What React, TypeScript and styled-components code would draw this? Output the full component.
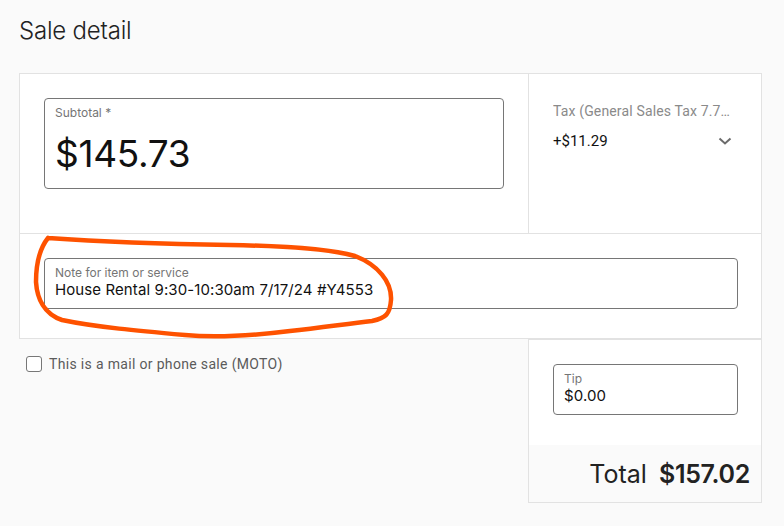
import React from 'react';
import styled, { createGlobalStyle } from 'styled-components';

const GlobalStyle = createGlobalStyle`
  html, body {
    margin: 0;
    padding: 0;
    background: #fafafa;
  }
  body {
    font-family: Inter, "Liberation Sans", sans-serif;
    color: #111;
  }
`;

export default function App() {
  return (
    <Page>
      <GlobalStyle />
      <Title>Sale detail</Title>
      <Grid>
        <Cell>
          <Field height={91}>
            <FieldLabel>Subtotal *</FieldLabel>
            <BigValue>$145.73</BigValue>
          </Field>
        </Cell>
        <TaxCell>
          <TaxLabel>Tax (General Sales Tax 7.75%)</TaxLabel>
          <TaxRow>
            <TaxValue>+$11.29</TaxValue>
            <Chevron width="14" height="8" viewBox="0 0 14 8">
              <path d="M1.5 1.5 L7 6.5 L12.5 1.5" fill="none" stroke="#6b6b6b" strokeWidth="2" />
            </Chevron>
          </TaxRow>
        </TaxCell>
        <NoteCell>
          <Field height={51}>
            <FieldLabel>Note for item or service</FieldLabel>
            <Value>House Rental 9:30-10:30am 7/17/24 #Y4553</Value>
          </Field>
        </NoteCell>
        <Moto>
          <Box />
          <MotoLabel>This is a mail or phone sale (MOTO)</MotoLabel>
        </Moto>
        <TipCell>
          <TipArea>
            <Field height={51}>
              <FieldLabel>Tip</FieldLabel>
              <Value>$0.00</Value>
            </Field>
          </TipArea>
          <TotalBar>
            <TotalWord>Total</TotalWord>
            <TotalAmount>$157.02</TotalAmount>
          </TotalBar>
        </TipCell>
      </Grid>
      <Scribble width="784" height="526" viewBox="0 0 784 526">
        <path
          d="M48 238 C 90 241, 160 244, 230 245 C 290 246, 330 249, 355 256 C 378 265, 392 282, 391 300 C 390 314, 386 318, 372 321 C 345 324, 320 328, 290 331 C 250 336, 215 338, 185 335 C 140 331, 95 327, 62 320 C 44 314, 37 298, 36 282 C 36 262, 40 248, 48 238"
          fill="none"
          stroke="#fe5200"
          strokeWidth="4.5"
          strokeLinecap="round"
          strokeLinejoin="round"
        />
      </Scribble>
    </Page>
  );
}

const Page = styled.div`
  position: relative;
  width: 784px;
  height: 526px;
  padding: 16px 0 0 19px;
  box-sizing: border-box;
  overflow: hidden;
`;

const Title = styled.h1`
  margin: 0;
  font-size: 24px;
  line-height: 30px;
  font-weight: 300;
  color: #222;
  letter-spacing: -0.2px;
`;

const Grid = styled.div`
  margin-top: 27px;
  display: grid;
  grid-template-columns: 509px 234px;
  grid-template-rows: 161px 105px 164px;
`;

const Cell = styled.div`
  background: #fff;
  border: 1px solid #e2e2e2;
  border-right: none;
  padding: 24px 24px 0 24px;
`;

const TaxCell = styled.div`
  background: #fff;
  border: 1px solid #e2e2e2;
  padding: 27px 29px 0 24px;
  min-width: 0;
`;

const NoteCell = styled.div`
  grid-column: 1 / 3;
  background: #fff;
  border: 1px solid #e2e2e2;
  border-top: none;
  padding: 24px 23px 0 24px;
`;

const Field = styled.div<{ height: number }>`
  height: ${(p) => p.height}px;
  box-sizing: border-box;
  border: 1px solid #767676;
  border-radius: 4px;
  background: #fff;
  padding: 6px 10px 0 10px;
  display: flex;
  flex-direction: column;
`;

const FieldLabel = styled.div`
  font-size: 12px;
  line-height: 15px;
  color: #757575;
`;

const BigValue = styled.div`
  margin-top: 12px;
  font-size: 37px;
  line-height: 44px;
  color: #111;
  letter-spacing: -0.3px;
`;

const Value = styled.div`
  margin-top: 0;
  font-size: 15px;
  line-height: 20px;
  color: #111;
  letter-spacing: 0.1px;
`;

const TaxLabel = styled.div`
  font-family: Roboto, "Liberation Sans", sans-serif;
  font-size: 14px;
  line-height: 20px;
  color: #8a8a8a;
  letter-spacing: 0.15px;
  white-space: nowrap;
  overflow: hidden;
  text-overflow: ellipsis;
`;

const TaxRow = styled.div`
  margin-top: 10px;
  display: flex;
  align-items: center;
  justify-content: space-between;
`;

const TaxValue = styled.div`
  font-family: Roboto, "Liberation Sans", sans-serif;
  font-size: 15px;
  line-height: 20px;
  color: #111;
`;

const Chevron = styled.svg`
  display: block;
`;

const Moto = styled.label`
  display: flex;
  align-items: center;
  gap: 7px;
  align-self: start;
  padding: 16px 0 0 7px;
`;

const Box = styled.span`
  width: 16px;
  height: 16px;
  box-sizing: border-box;
  border: 1.5px solid #777;
  border-radius: 3px;
  background: #fff;
`;

const MotoLabel = styled.span`
  font-family: Roboto, "Liberation Sans", sans-serif;
  font-size: 14px;
  line-height: 18px;
  color: #5b5b5b;
  letter-spacing: 0.33px;
`;

const TipCell = styled.div`
  background: #fff;
  border: 1px solid #e2e2e2;
  display: flex;
  flex-direction: column;
`;

const TipArea = styled.div`
  padding: 24px 23px 0 24px;
  flex: 1;
`;

const TotalBar = styled.div`
  height: 57px;
  background: #fafafa;
  display: flex;
  align-items: center;
  justify-content: flex-end;
  gap: 12px;
  padding-right: 11px;
  color: #222;
`;

const TotalWord = styled.span`
  font-size: 25px;
  font-weight: 400;
`;

const TotalAmount = styled.span`
  font-size: 25px;
  font-weight: 600;
  letter-spacing: -0.3px;
`;

const Scribble = styled.svg`
  position: absolute;
  left: 0;
  top: 0;
  pointer-events: none;
`;
